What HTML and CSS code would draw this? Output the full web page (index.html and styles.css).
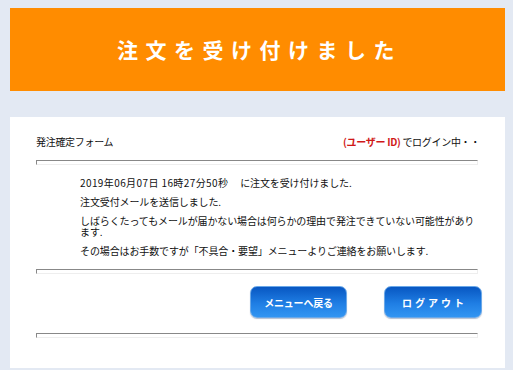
FILE: index.html
```html
<!DOCTYPE html>
<html lang="ja">
<head>
<meta charset="utf-8">
<link rel="stylesheet" href="styles.css">
</head>
<body>
<div class="page">
  <header class="banner"><h1 class="banner-title">注文を受け付けました</h1></header>
  <main class="card">
    <div class="head">
      <span class="form-name">発注確定フォーム</span>
      <span class="login"><b class="user">(ユーザー ID)</b> でログイン中・・</span>
    </div>
    <div class="rule"></div>
    <div class="message">
      <p><span class="stamp">2019年06月07日 16時27分50秒</span>　に注文を受け付けました.</p>
      <p>注文受付メールを送信しました.</p>
      <p>しばらくたってもメールが届かない場合は何らかの理由で発注できていない可能性があり<span class="nw">ます.</span></p>
      <p>その場合はお手数ですが「不具合・要望」メニューよりご連絡をお願いします.</p>
    </div>
    <div class="rule rule-b"></div>
    <div class="actions">
      <button class="btn">メニューへ戻る</button>
      <button class="btn btn-wide">ログアウト</button>
    </div>
    <div class="rule rule-c"></div>
  </main>
</div>
</body>
</html>
```

FILE: styles.css
```css
html, body {
  margin: 0;
  padding: 0;
  background: #e3e9f3;
}
body {
  font-family: "Noto Sans CJK JP", "Liberation Sans", sans-serif;
  color: #111;
}
.page {
  padding: 8px 8px 6px 10px;
}
.banner {
  background: #ff8c00;
  height: 83px;
  display: flex;
  align-items: center;
  justify-content: center;
}
.banner-title {
  margin: 0;
  color: #fff;
  font-size: 21px;
  font-weight: 700;
  letter-spacing: 7.5px;
  padding-left: 4px;
  line-height: 1;
}
.card {
  margin-top: 26px;
  background: #fff;
  padding: 18px 27px 30px 26px;
}
.head {
  display: flex;
  justify-content: space-between;
  align-items: center;
  font-size: 10px;
  line-height: 14px;
  letter-spacing: -0.3px;
  margin-right: -2px;
}
.user {
  color: #d01818;
  font-weight: 700;
}
.rule {
  margin-top: 11px;
  height: 3px;
  border-top: 1px solid #888;
  border-left: 1px solid #888;
  border-right: 1px solid #eee;
  border-bottom: 1px solid #eee;
}
.message {
  margin: 12px 0 0 44px;
  max-width: 396px;
  font-size: 10px;
  line-height: 11px;
  letter-spacing: -0.12px;
}
.message p {
  margin: 0 0 8px;
}
.message p:last-child {
  margin-bottom: 0;
}
.nw {
  white-space: nowrap;
}
.stamp {
  letter-spacing: 0.4px;
  margin-right: 2px;
}
.rule-b {
  margin-top: 13px;
}
.actions {
  display: flex;
  justify-content: flex-end;
  gap: 37px;
  margin: 12px -4px 0 0;
}
.btn {
  width: 97px;
  height: 32px;
  border: 1px solid #6aa8e8;
  border-radius: 7px;
  background: linear-gradient(#0857c2, #1f7ee4 55%, #3295f2);
  color: #fff;
  font-family: "Noto Sans CJK JP", "Liberation Sans", sans-serif;
  font-size: 10px;
  font-weight: 700;
  letter-spacing: -0.2px;
  padding: 0;
  box-shadow: 0 1px 1px rgba(0, 40, 100, 0.3);
}
.btn-wide {
  width: 98px;
  letter-spacing: 3px;
  padding-left: 3px;
}
.rule-c {
  margin-top: 15px;
}
```
